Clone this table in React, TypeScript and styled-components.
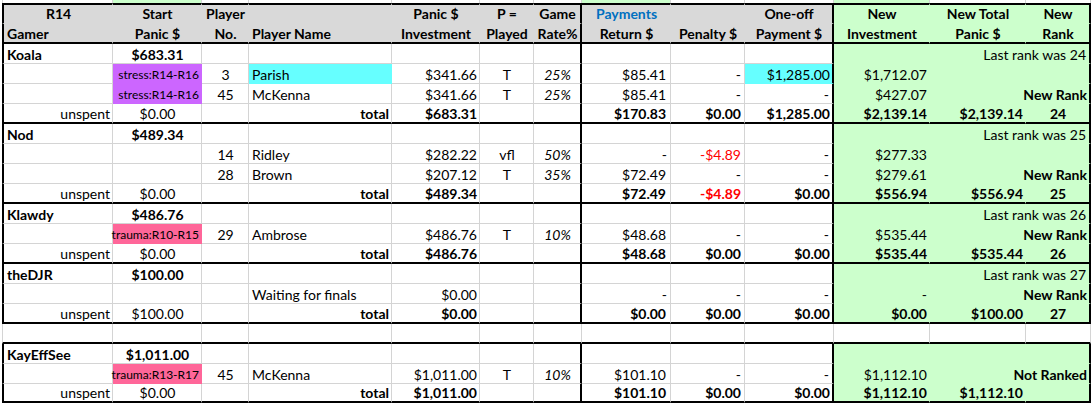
import React from "react";
import styled, { createGlobalStyle } from "styled-components";

type Align = "l" | "c" | "r";
type RowKind = "strip" | "h1" | "h2" | "first" | "mid" | "last" | "blank";

interface CellSpec {
  t?: string;
  a?: Align;
  b?: boolean;
  i?: boolean;
  fill?: string;
  ink?: string;
  span?: number;
  small?: boolean;
  padR?: number;
}

interface RowSpec {
  kind: RowKind;
  cells: CellSpec[];
}

const GRID = "#d4d4d4";
const HEAD = "#d9d9d9";
const GREEN = "#ccffcc";
const CYAN = "#66ffff";
const PURPLE = "#cc66ff";
const PINK = "#ff6699";
const BLUE = "#0070c0";
const RED = "#ff0000";
const THICK = "2px solid #000";

const GlobalStyle = createGlobalStyle`
  body {
    margin: 0;
    background: #fff;
  }
`;

const Sheet = styled.div`
  display: grid;
  grid-template-columns: 111px 89px 47px 143px 88px 54px 48px 89px 74px 89px 96px 96px 65px;
  grid-template-rows: 3px 21px repeat(18, 20px);
  margin-left: 2px;
  font-family: Lato, "Liberation Sans", sans-serif;
  font-size: 14px;
  color: #000;
`;

const Cell = styled.div<{
  $align: Align;
  $bold?: boolean;
  $italic?: boolean;
  $fill?: string;
  $ink?: string;
  $span: number;
  $small?: boolean;
  $padR: number;
  $padB: number;
  $l: string;
  $r: string;
  $t: string;
  $b: string;
}>`
  grid-column: span ${(p) => p.$span};
  display: flex;
  align-items: flex-end;
  justify-content: ${(p) =>
    p.$align === "l" ? "flex-start" : p.$align === "c" ? "center" : "flex-end"};
  box-sizing: border-box;
  padding: 0 ${(p) => p.$padR}px ${(p) => p.$padB}px 3px;
  background: ${(p) => p.$fill ?? "#fff"};
  color: ${(p) => p.$ink ?? "#000"};
  font-weight: ${(p) => (p.$bold ? 700 : 400)};
  font-style: ${(p) => (p.$italic ? "italic" : "normal")};
  font-size: ${(p) => (p.$small ? "12px" : "14px")};
  line-height: 17px;
  white-space: nowrap;
  border-left: ${(p) => p.$l};
  border-right: ${(p) => p.$r};
  border-top: ${(p) => p.$t};
  border-bottom: ${(p) => p.$b};
`;

const l = (t: string, o: CellSpec = {}): CellSpec => ({ t, a: "l", ...o });
const c = (t: string, o: CellSpec = {}): CellSpec => ({ t, a: "c", ...o });
const r = (t: string, o: CellSpec = {}): CellSpec => ({ t, a: "r", ...o });
const e = (o: CellSpec = {}): CellSpec => ({ t: "", ...o });
const g = (t = "", o: CellSpec = {}): CellSpec => ({ t, a: "r", fill: GREEN, ...o });
const h = (t: string, o: CellSpec = {}): CellSpec => ({ t, a: "c", b: true, fill: HEAD, ...o });
const hg = (t: string): CellSpec => ({ t, a: "c", b: true, fill: GREEN });

const tag = (t: string, fill: string): CellSpec => ({ t, a: "r", small: true, fill });
const rate = (t: string): CellSpec => ({ t, a: "c", i: true });
const dash = (): CellSpec => ({ t: "-", a: "r", padR: 3 });
const ret = (t: string, o: CellSpec = {}): CellSpec => ({ t, a: "r", padR: 4, ...o });

const groupFirst = (name: string, start: string, last: string | null): RowSpec => ({
  kind: "first",
  cells: [
    l(name, { b: true }),
    c(start, { b: true }),
    e(), e(), e(), e(), e(), e(), e(), e(),
    last ? g(last, { span: 3, padR: 3 }) : g("", { span: 3 }),
  ],
});

const totalRow = (
  unspent: string,
  inv: string,
  retn: string,
  pen: string,
  oneoff: string,
  newInv: string,
  newTotal: string,
  rank: string,
  penRed = false
): RowSpec => ({
  kind: "last",
  cells: [
    r("unspent"),
    c(unspent),
    e(),
    r("total", { b: true }),
    r(inv, { b: true }),
    e(),
    e(),
    ret(retn, { b: true }),
    r(pen, { b: true, padR: 3, ink: penRed ? RED : undefined }),
    r(oneoff, { b: true }),
    g(newInv, { b: true }),
    g(newTotal, { b: true }),
    { t: rank, a: "c", b: true, fill: GREEN },
  ],
});

const rows: RowSpec[] = [
  {
    kind: "strip",
    cells: [e(), e({ fill: GREEN }), e(), e(), e(), e(), e(), e({ fill: GREEN }), e(), e(), e({ fill: GREEN }), e(), e()],
  },
  {
    kind: "h1",
    cells: [
      h("R14"), h("Start"), h("Player"), h(""), h("Panic $"), h("P ="), h("Game"),
      h("Payments", { ink: BLUE }), h(""), h("One-off"),
      hg("New"), hg("New Total"), hg("New"),
    ],
  },
  {
    kind: "h2",
    cells: [
      h("Gamer", { a: "l" }), h("Panic $"), h("No."), h("Player Name", { a: "l" }),
      h("Investment"), h("Played"), h("Rate%"), h("Return $"), h("Penalty $"), h("Payment $"),
      hg("Investment"), hg("Panic $"), hg("Rank"),
    ],
  },

  groupFirst("Koala", "$683.31", "Last rank was 24"),
  {
    kind: "mid",
    cells: [
      e(), tag("stress:R14-R16", PURPLE), c("3"), l("Parish", { fill: CYAN }),
      r("$341.66"), c("T"), rate("25%"), ret("$85.41"), dash(),
      r("$1,285.00", { fill: CYAN }),
      g("$1,712.07"), g(), g(),
    ],
  },
  {
    kind: "mid",
    cells: [
      e(), tag("stress:R14-R16", PURPLE), c("45"), l("McKenna"),
      r("$341.66"), c("T"), rate("25%"), ret("$85.41"), dash(), dash(),
      g("$427.07"), g(), g("New Rank", { b: true }),
    ],
  },
  totalRow("$0.00", "$683.31", "$170.83", "$0.00", "$1,285.00", "$2,139.14", "$2,139.14", "24"),

  groupFirst("Nod", "$489.34", "Last rank was 25"),
  {
    kind: "mid",
    cells: [
      e(), e(), c("14"), l("Ridley"),
      r("$282.22"), c("vfl"), rate("50%"), dash(), r("-$4.89", { ink: RED, padR: 3 }), dash(),
      g("$277.33"), g(), g(),
    ],
  },
  {
    kind: "mid",
    cells: [
      e(), e(), c("28"), l("Brown"),
      r("$207.12"), c("T"), rate("35%"), ret("$72.49"), dash(), dash(),
      g("$279.61"), g(), g("New Rank", { b: true }),
    ],
  },
  totalRow("$0.00", "$489.34", "$72.49", "-$4.89", "$0.00", "$556.94", "$556.94", "25", true),

  groupFirst("Klawdy", "$486.76", "Last rank was 26"),
  {
    kind: "mid",
    cells: [
      e(), tag("trauma:R10-R15", PINK), c("29"), l("Ambrose"),
      r("$486.76"), c("T"), rate("10%"), ret("$48.68"), dash(), dash(),
      g("$535.44"), g(), g("New Rank", { b: true }),
    ],
  },
  totalRow("$0.00", "$486.76", "$48.68", "$0.00", "$0.00", "$535.44", "$535.44", "26"),

  groupFirst("theDJR", "$100.00", "Last rank was 27"),
  {
    kind: "mid",
    cells: [
      e(), e(), e(), l("Waiting for finals"),
      r("$0.00"), e(), e(), dash(), dash(), dash(),
      g("-"), g(), g("New Rank", { b: true }),
    ],
  },
  totalRow("$100.00", "$0.00", "$0.00", "$0.00", "$0.00", "$0.00", "$100.00", "27"),

  { kind: "blank", cells: Array.from({ length: 13 }, () => e()) },

  groupFirst("KayEffSee", "$1,011.00", null),
  {
    kind: "mid",
    cells: [
      e(), tag("trauma:R13-R17", PINK), c("45"), l("McKenna"),
      r("$1,011.00"), c("T"), rate("10%"), ret("$101.10"), dash(), dash(),
      g("$1,112.10"), g("Not Ranked", { b: true, span: 2 }),
    ],
  },
  totalRow("$0.00", "$1,011.00", "$101.10", "$0.00", "$0.00", "$1,112.10", "$1,112.10", ""),
];

// column index after which a heavy vertical rule is drawn
const heavyRight = new Set([6, 9, 12]);

const edgesFor = (kind: RowKind, col: number, span: number, fill?: string) => {
  const last = col + span - 1;
  const line = `1px solid ${fill ?? GRID}`;
  const framed = kind !== "strip" && kind !== "blank";

  const left = col === 0 ? (framed ? THICK : `1px solid ${GRID}`) : "none";
  const right = framed && heavyRight.has(last) ? THICK : kind === "strip" ? `1px solid ${GRID}` : line;
  const top = kind === "h1" ? THICK : "none";
  let bottom = line;
  if (kind === "h2" || kind === "last" || kind === "blank") bottom = THICK;
  if (kind === "strip") bottom = "none";
  return { left, right, top, bottom };
};

const padBottomFor = (kind: RowKind) => {
  if (kind === "h1") return 1;
  return 0;
};

export default function App() {
  return (
    <>
      <GlobalStyle />
      <Sheet>
        {rows.map((row, ri) => {
          let col = 0;
          return row.cells.map((cell, ci) => {
            const span = cell.span ?? 1;
            const edges = edgesFor(row.kind, col, span, cell.fill);
            col += span;
            return (
              <Cell
                key={`${ri}-${ci}`}
                $align={cell.a ?? "l"}
                $bold={cell.b}
                $italic={cell.i}
                $fill={cell.fill}
                $ink={cell.ink}
                $span={span}
                $small={cell.small}
                $padR={cell.padR ?? 2}
                $padB={padBottomFor(row.kind)}
                $l={edges.left}
                $r={edges.right}
                $t={edges.top}
                $b={edges.bottom}
              >
                {cell.t}
              </Cell>
            );
          });
        })}
      </Sheet>
    </>
  );
}
